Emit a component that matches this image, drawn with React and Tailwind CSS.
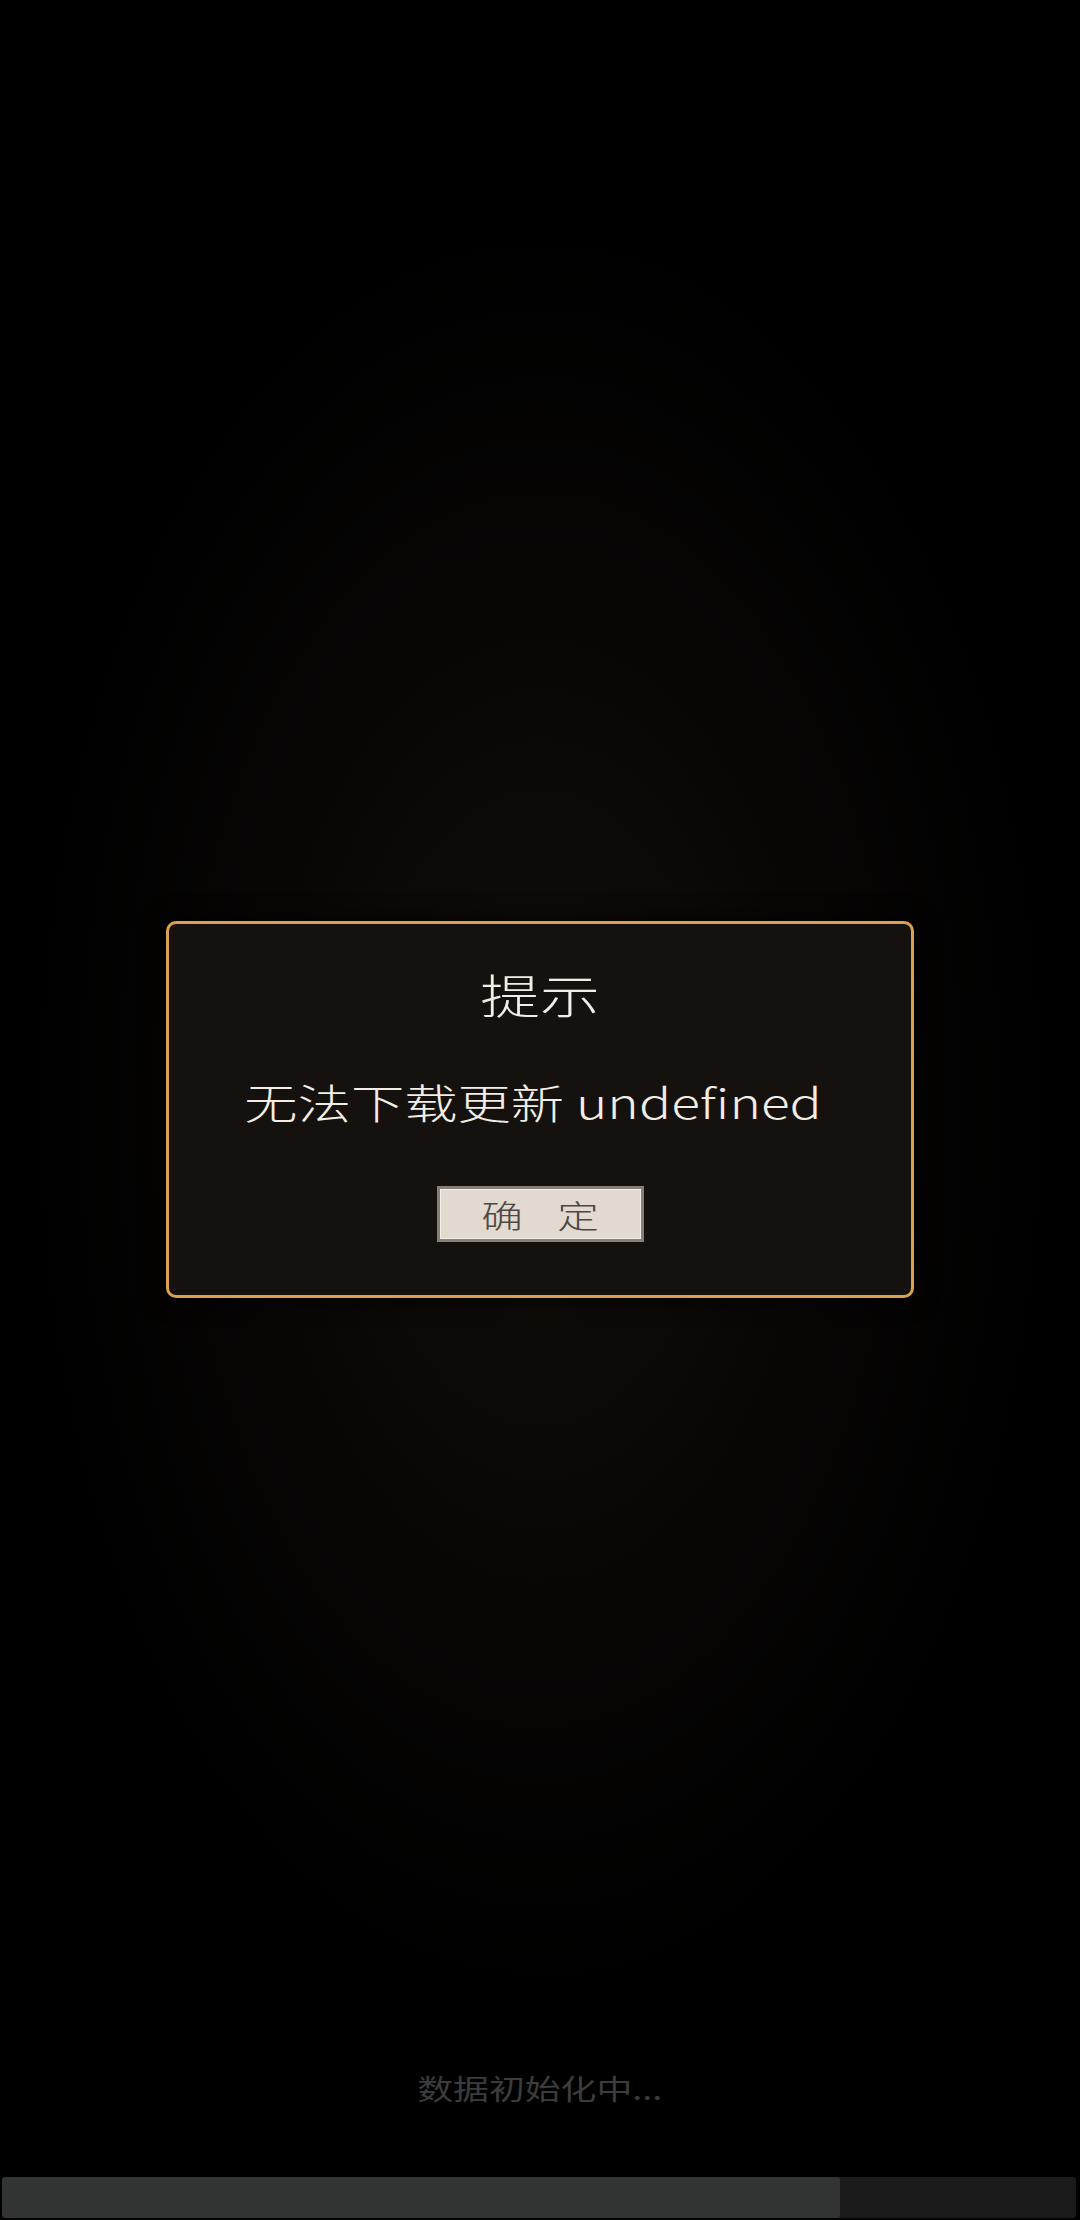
import React from "react";

const cjk = {
  fontFamily: '"Noto Sans CJK SC", "Noto Sans", sans-serif',
};

export default function App() {
  return (
    <div
      className="relative flex h-[2220px] w-[1080px] flex-col overflow-hidden bg-black bg-[radial-gradient(ellipse_520px_900px_at_540px_1110px,#120d07_0%,#080605_55%,#000000_100%)]"
      style={cjk}
    >
      <div className="h-[150px] bg-black" />

      {/* dialog */}
      <div className="ml-[166px] mt-[771px] flex h-[377px] w-[748px] flex-col items-center rounded-[10px] border-[3px] border-[#dca14f] bg-[#15110e] shadow-[0_0_24px_rgba(0,0,0,0.8)]">
        <div className="mt-[46px] inline-block origin-center scale-x-[1.3] text-[46px] font-light leading-none text-[#f2eee6]">
          提示
        </div>
        <div className="mr-[14px] mt-[65px] inline-block origin-center scale-x-[1.3] text-[41px] font-light leading-none text-[#f2eee6]">
          无法下载更新 undefined
        </div>
        <button className="mt-[64px] flex h-[56px] w-[207px] items-center justify-center gap-[44px] border-[3px] border-[#857f79] bg-[#e2dad1] text-[32px] font-light leading-none text-[#4d4844] shadow-[inset_0_0_0_1px_#f4efe8]">
          <span className="inline-block scale-x-[1.3]">确</span>
          <span className="inline-block scale-x-[1.3]">定</span>
        </button>
      </div>

      <div className="mt-auto flex flex-col items-center">
        <div className="inline-block origin-center scale-x-[1.28] text-[28px] leading-none text-[#3c3c3c]">
          数据初始化中...
        </div>
        <div className="mb-[2px] ml-[2px] mr-[4px] mt-[75px] flex h-[41px] self-stretch overflow-hidden rounded-[3px] bg-[#1b1b1b]">
          <div className="h-full w-[838px] rounded-[3px] bg-[#323433]" />
        </div>
      </div>
    </div>
  );
}
